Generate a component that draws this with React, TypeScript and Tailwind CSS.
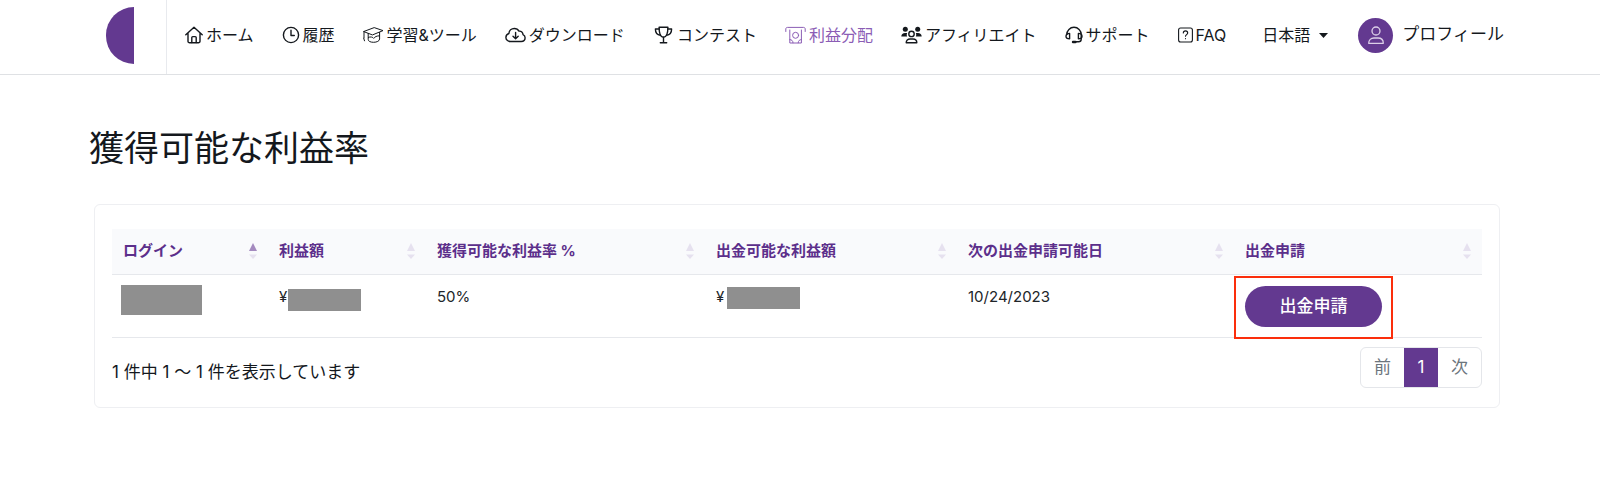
import type { ReactNode } from "react";

const jp = "font-['Inter','Noto_Sans_CJK_JP',sans-serif]";

function Icon({ children, wide = false, weight = 1.4 }: { children: ReactNode; wide?: boolean; weight?: number }) {
  return (
    <svg
      className={wide ? "h-[18px] w-[21px] shrink-0" : "h-[18px] w-[18px] shrink-0"}
      viewBox={wide ? "0 0 21 18" : "0 0 18 18"}
      fill="none"
      stroke="currentColor"
      strokeWidth={weight}
      strokeLinecap="round"
      strokeLinejoin="round"
      aria-hidden="true"
    >
      {children}
    </svg>
  );
}

const navItems = [
  {
    label: "ホーム",
    icon: (
      <Icon>
        <path d="M.8 8.800 9 1.300l8.200 7.500M3 7v8.200a1.600 1.600 0 0 0 1.600 1.600h8.800a1.600 1.600 0 0 0 1.600-1.600V7" />
        <path d="M6.800 16.600v-5a1 1 0 0 1 1-1h2.400a1 1 0 0 1 1 1v5" />
      </Icon>
    ),
  },
  {
    label: "履歴",
    icon: (
      <Icon>
        <circle cx="9" cy="9" r="7.600" />
        <path d="M9 4.300v5.200h3.300" />
      </Icon>
    ),
  },
  {
    label: "学習&ツール",
    icon: (
      <Icon wide weight={1}>
        <path d="M1 5.400 11.200 1.600 20 4.600 9.800 8.800Z" />
        <path d="M1 5.400v6.400M.7 12.200l.8 2.600" />
        <path d="M5.200 7.400v6c0 1.900 2.300 2.900 5.400 2.900s6-1.300 6-3.300V6.400" />
        <path d="M5.400 11.400c1.800-.9 4.500-.5 5.300 1 .9-1.500 3.200-2.700 5.700-2.600" />
      </Icon>
    ),
  },
  {
    label: "ダウンロード",
    icon: (
      <Icon wide>
        <path d="M5.400 15.500C2.800 15.500.9 13.700.9 11.400c0-1.900 1.200-3.400 3-3.900C4.100 4.500 6.500 2.500 9.300 2.500c2.200 0 3.800 1 4.700 2.600 2.300-.2 4 1.300 4 3.500 1.300.5 2.100 1.700 2.100 3.200 0 2.200-1.700 3.700-3.900 3.700Z" />
        <path d="M10.600 6.500v6M8 10.300l2.600 2.500 2.600-2.500" />
      </Icon>
    ),
  },
  {
    label: "コンテスト",
    icon: (
      <Icon wide>
        <path d="M6.100 1.200h8.800c0 5-.9 10-4.400 10s-4.400-5-4.400-10Z" />
        <path d="M6.200 3H2.400c0 3.600 1.800 6 5 6.200M14.800 3h3.800c0 3.600-1.800 6-5 6.200M10.500 11.200v5.300M7.300 16.800h6.400" />
      </Icon>
    ),
  },
  {
    label: "利益分配",
    active: true,
    icon: (
      <Icon wide weight={1}>
        <path d="M.8 5.500V3c0-1 .7-1.600 1.600-1.600h16.200c.9 0 1.600.6 1.600 1.600v2.500" />
        <path d="M4.800 4v13h11.600V4M4.800 13.600c2 0 3.200 1.200 3.200 3.200M16.400 13.600c-2 0-3.200 1.200-3.200 3.200" />
        <circle cx="10.600" cy="9.300" r="3" />
      </Icon>
    ),
  },
  {
    label: "アフィリエイト",
    icon: (
      <Icon wide>
        <g fill="currentColor" stroke="none">
          <circle cx="4.300" cy="3.300" r="2.500" />
          <circle cx="16.700" cy="3.300" r="2.500" />
          <path d="M.3 10.600C.3 8.300 1.900 7 4 7h2.200c-.6 1.200-.6 2.500 0 3.600ZM20.700 10.600C20.700 8.300 19.100 7 17 7h-2.200c.6 1.200.6 2.500 0 3.600Z" />
        </g>
        <circle cx="10.500" cy="7.900" r="2.700" />
        <path d="M5.200 16.800c0-2.300 1.600-3.800 3.800-3.800h3c2.200 0 3.800 1.500 3.800 3.800Z" />
      </Icon>
    ),
  },
  {
    label: "サポート",
    icon: (
      <Icon>
        <path d="M1.800 8.500C1.800 4.500 5 1.300 9 1.300s7.200 3.200 7.200 7.200v4.800c0 1.600-1.200 2.500-2.600 2.500H9.500" />
        <path d="M4.600 7.400c-2.200 0-3.600 1-3.600 2.800s1.200 2.600 3.600 2.600ZM13.400 7.400c2.200 0 3.600 1 3.600 2.800s-1.200 2.600-3.600 2.600Z" />
        <path d="M8 16h2.400" strokeWidth="2.400" />
      </Icon>
    ),
  },
  {
    label: "FAQ",
    icon: (
      <svg
        className="h-[18px] w-[15px] shrink-0"
        viewBox="0 0 15 18"
        fill="none"
        stroke="currentColor"
        strokeWidth="1.100"
        strokeLinecap="round"
        aria-hidden="true"
      >
        <rect x=".6" y="2" width="13.800" height="14" rx="2" />
        <path d="M5.300 7c0-1.300.9-2.100 2.200-2.100S9.700 5.700 9.700 7c0 1.500-2.200 1.700-2.200 3.300M7.500 12.600v.2" />
      </svg>
    ),
  },
];

const columns = [
  { label: "ログイン", width: "w-[156px]", sorted: true },
  { label: "利益額", width: "w-[158px]" },
  { label: "獲得可能な利益率 %", width: "w-[279px]" },
  { label: "出金可能な利益額", width: "w-[252px]" },
  { label: "次の出金申請可能日", width: "w-[277px]" },
  { label: "出金申請", width: "w-[248px]" },
];

function SortMark({ sorted = false }: { sorted?: boolean }) {
  return (
    <svg className="h-4 w-2 shrink-0" viewBox="0 0 8 16" aria-hidden="true">
      <path d="M4 0 8 8H0Z" fill={sorted ? "#a48abf" : "#e6e1ef"} />
      <path d="M0 11.500h8L4 16Z" fill="#e6e1ef" />
    </svg>
  );
}

function Header() {
  return (
    <header className="flex h-[75px] border-b border-[#dfe1e4] bg-white">
      <a href="#home" aria-label="トップ" className="flex shrink-0 items-start border-r border-[#e8eaee] pt-[7px] pr-8 pl-[106px]">
        <span className="block h-[57px] w-7 rounded-l-full bg-[#633990]" />
      </a>
      <nav className="flex h-[70px] flex-1 items-center pl-[18px] text-base text-[#14181d]">
        <ul className="flex items-center gap-7">
          {navItems.map((item) => (
            <li key={item.label}>
              <a
                href="#"
                className={
                  item.active
                    ? "flex items-center gap-[3px] whitespace-nowrap text-[#8b5db5]"
                    : "flex items-center gap-[3px] whitespace-nowrap"
                }
              >
                {item.icon}
                <span>{item.label}</span>
              </a>
            </li>
          ))}
        </ul>
        <div className="relative ml-9 flex items-center">
          <select aria-label="言語" className="h-10 w-[66px] appearance-none bg-transparent leading-8 outline-none">
            <option>日本語</option>
          </select>
          <svg className="pointer-events-none absolute right-0 h-[5px] w-[9px]" viewBox="0 0 9 5" aria-hidden="true">
            <path d="M0 0h9L4.500 5Z" fill="#14181d" />
          </svg>
        </div>
        <a href="#profile" className="ml-[30px] flex items-center gap-[9px] whitespace-nowrap text-[17px]">
          <span className="flex size-[35px] items-center justify-center rounded-full bg-[#633990]">
            <svg className="h-5 w-5" viewBox="0 0 20 20" fill="none" stroke="#dccfe8" strokeWidth="1.300" aria-hidden="true">
              <circle cx="10" cy="6" r="4" />
              <path d="M2.700 18.300c0-3.400 2.200-5.300 5.300-5.300h4c3.100 0 5.300 1.900 5.300 5.300Z" strokeLinejoin="round" />
            </svg>
          </span>
          <span>プロフィール</span>
        </a>
      </nav>
    </header>
  );
}

function EarningsTable() {
  return (
    <table className="w-full table-fixed border-collapse text-[15px]">
      <thead>
        <tr className="h-[45px] border-b border-[#e6e8ec] bg-[#f9fafc] text-left text-[#5c2f8b]">
          {columns.map((column) => (
            <th key={column.label} className={`${column.width} px-[11px] font-bold`} aria-sort={column.sorted ? "ascending" : "none"}>
              <span className="flex items-center justify-between">
                {column.label}
                <SortMark sorted={column.sorted} />
              </span>
            </th>
          ))}
        </tr>
      </thead>
      <tbody>
        <tr className="border-b border-[#e6e8ec] align-top leading-6 text-[#212529]">
          <td className="px-[9px] pt-[10px]">
            <div className="h-[30px] w-[81px] bg-[#8f8f8f]" />
          </td>
          <td className="relative px-[11px] pt-[10px]">
            ¥
            <div className="absolute top-[14px] left-5 h-[22px] w-[73px] bg-[#8f8f8f]" />
          </td>
          <td className="px-[11px] pt-[10px]">50%</td>
          <td className="relative px-[11px] pt-[10px]">
            ¥
            <div className="absolute top-[12px] left-[22px] h-[22px] w-[73px] bg-[#8f8f8f]" />
          </td>
          <td className="px-[11px] pt-[10px]">10/24/2023</td>
          <td className="px-[11px] pt-[11px] pb-[10px]">
            <div className="relative w-fit">
              <button type="button" className="block h-[41px] w-[137px] rounded-full bg-[#633990] text-[17px] font-medium text-white">
                出金申請
              </button>
              <div className="pointer-events-none absolute -inset-x-[11px] -top-[10px] -bottom-3 border-2 border-[#fb2e0c]" />
            </div>
          </td>
        </tr>
      </tbody>
    </table>
  );
}

export default function App() {
  return (
    <div className={`${jp} min-h-screen bg-white text-[#14181d]`} lang="ja">
      <Header />
      <main className="pt-[52px] pr-[95px] pl-[89px]">
        <h1 className="text-[35px] leading-[42px]">獲得可能な利益率</h1>
        <section className="mx-[5px] mt-[35px] rounded-md border border-[#eeeff2] px-[17px] pt-6 pb-[19px]">
          <EarningsTable />
          <div className="flex items-start justify-between pt-[9px] text-[17px]">
            <p className="pt-[13px] leading-6">1 件中 1 〜 1 件を表示しています</p>
            <nav aria-label="ページ" className="flex h-[41px] overflow-hidden rounded-md border border-[#e4e6ea] text-[#6c757d]">
              <button type="button" className="px-[13px] pt-[2px]">前</button>
              <button type="button" aria-current="page" className="-my-px w-[34px] bg-[#633990] pt-[2px] text-white">1</button>
              <button type="button" className="px-[13px] pt-[2px]">次</button>
            </nav>
          </div>
        </section>
      </main>
    </div>
  );
}
